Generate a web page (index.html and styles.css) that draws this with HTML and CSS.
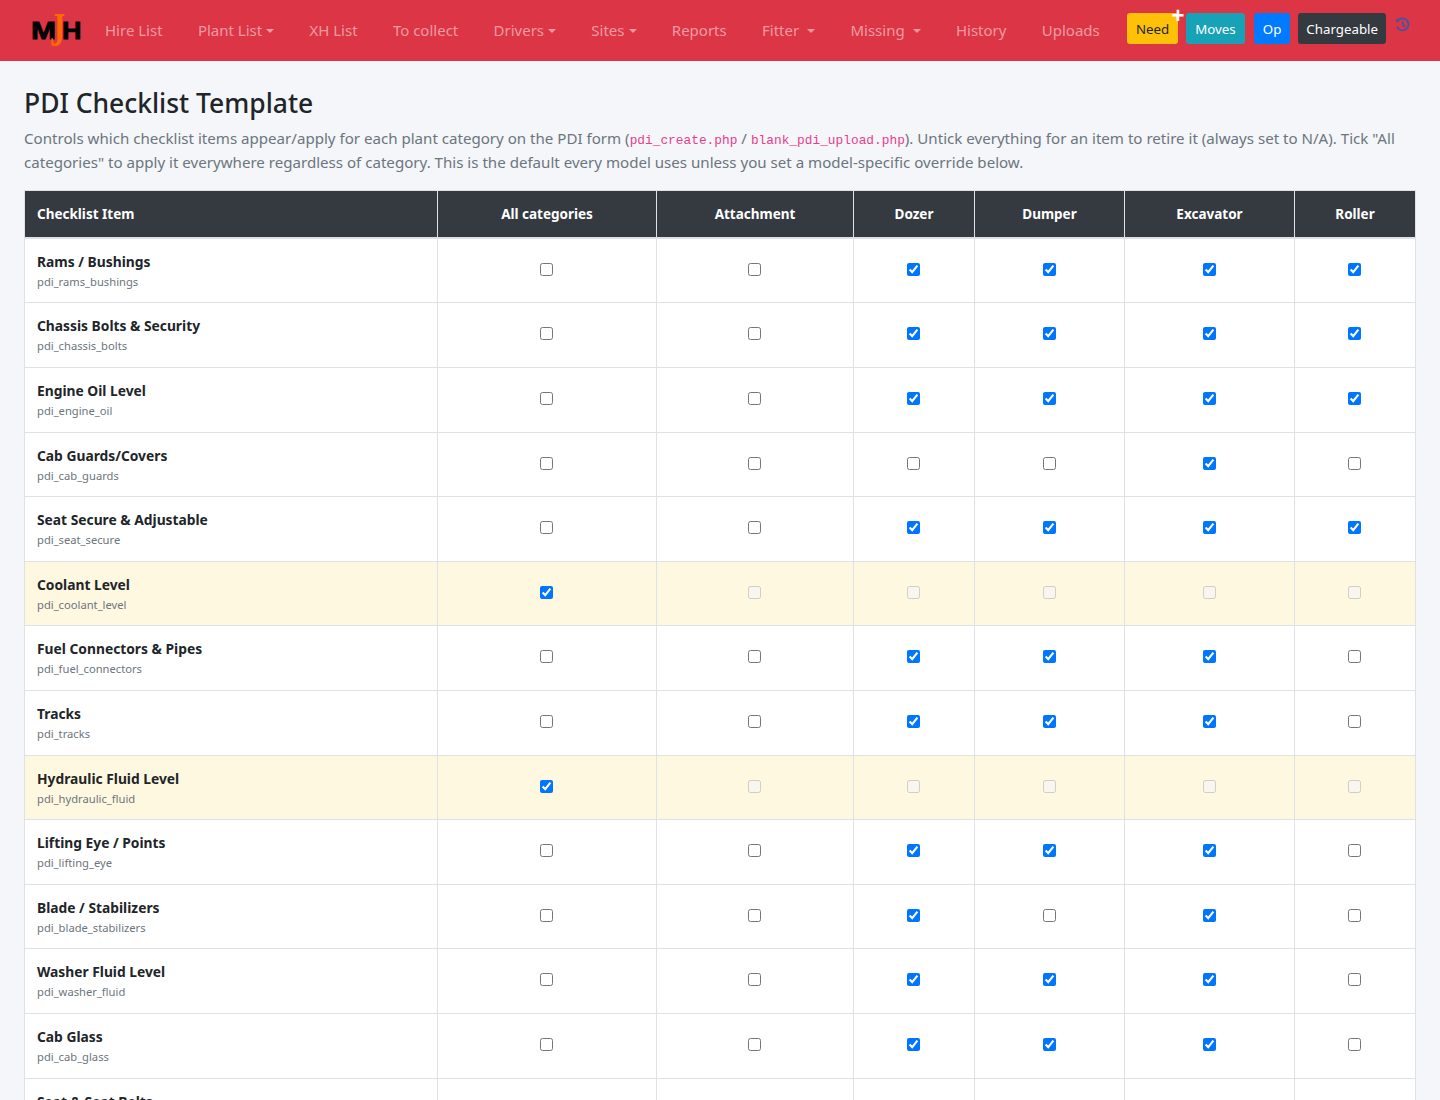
FILE: index.html
```html
<!DOCTYPE html>
<html lang="en">
<head>
    <meta charset="UTF-8">
    <meta name="viewport" content="width=device-width, initial-scale=1.0">
    <title>PDI Checklist Template</title>
    <link rel="stylesheet" href="styles.css">
</head>
<body>
    <nav class="top-nav">
        <a href="#" class="brand">
            <svg width="52" height="36" viewBox="0 0 52 36">
                <text x="0" y="25.5" class="logo-letter" textLength="25" lengthAdjust="spacingAndGlyphs">M</text>
                <text x="31" y="25.5" class="logo-letter" textLength="19.5" lengthAdjust="spacingAndGlyphs">H</text>
                <text x="19" y="33" class="logo-j" textLength="15" lengthAdjust="spacingAndGlyphs">J</text>
            </svg>
        </a>
        <ul class="nav-links">
            <li><a href="#">Hire List</a></li>
            <li><a href="#" class="caret">Plant List</a></li>
            <li><a href="#">XH List</a></li>
            <li><a href="#">To collect</a></li>
            <li><a href="#" class="caret">Drivers</a></li>
            <li><a href="#" class="caret">Sites</a></li>
            <li><a href="#">Reports</a></li>
            <li><a href="#" class="caret wide">Fitter</a></li>
            <li><a href="#" class="caret wide">Missing</a></li>
            <li><a href="#">History</a></li>
            <li><a href="#">Uploads</a></li>
        </ul>
        <div class="nav-buttons">
            <a href="#" class="btn btn-need">Need<span class="plus">+</span></a>
            <a href="#" class="btn btn-moves">Moves</a>
            <a href="#" class="btn btn-op">Op</a>
            <a href="#" class="btn btn-charge">Chargeable</a>
            <svg class="history-icon" width="15" height="15" viewBox="0 0 15 15">
                <path d="M3.2 3.2A6 6 0 1 1 2 9.6" />
                <path d="M1 1.2V5H4.8Z" class="fill" />
                <path d="M7.8 4.4V8L10 9.6" />
            </svg>
        </div>
    </nav>

    <main class="page">
        <h1>PDI Checklist Template</h1>
        <p class="intro">Controls which checklist items appear/apply for each plant category on the PDI form (<code>pdi_create.php</code> / <code>blank_pdi_upload.php</code>). Untick everything for an item to retire it (always set to N/A). Tick "All categories" to apply it everywhere regardless of category. This is the default every model uses unless you set a model-specific override below.</p>

        <table class="check-table">
            <colgroup>
                <col class="c-item"><col class="c-all"><col class="c-att"><col class="c-doz"><col class="c-dum"><col class="c-exc"><col class="c-rol">
            </colgroup>
            <thead>
                <tr>
                    <th>Checklist Item</th>
                    <th>All categories</th>
                    <th>Attachment</th>
                    <th>Dozer</th>
                    <th>Dumper</th>
                    <th>Excavator</th>
                    <th>Roller</th>
                </tr>
            </thead>
            <tbody>
                <tr>
                    <td><strong>Rams / Bushings</strong><small>pdi_rams_bushings</small></td>
                    <td><input type="checkbox"></td>
                    <td><input type="checkbox"></td>
                    <td><input type="checkbox" checked></td>
                    <td><input type="checkbox" checked></td>
                    <td><input type="checkbox" checked></td>
                    <td><input type="checkbox" checked></td>
                </tr>
                <tr>
                    <td><strong>Chassis Bolts &amp; Security</strong><small>pdi_chassis_bolts</small></td>
                    <td><input type="checkbox"></td>
                    <td><input type="checkbox"></td>
                    <td><input type="checkbox" checked></td>
                    <td><input type="checkbox" checked></td>
                    <td><input type="checkbox" checked></td>
                    <td><input type="checkbox" checked></td>
                </tr>
                <tr>
                    <td><strong>Engine Oil Level</strong><small>pdi_engine_oil</small></td>
                    <td><input type="checkbox"></td>
                    <td><input type="checkbox"></td>
                    <td><input type="checkbox" checked></td>
                    <td><input type="checkbox" checked></td>
                    <td><input type="checkbox" checked></td>
                    <td><input type="checkbox" checked></td>
                </tr>
                <tr>
                    <td><strong>Cab Guards/Covers</strong><small>pdi_cab_guards</small></td>
                    <td><input type="checkbox"></td>
                    <td><input type="checkbox"></td>
                    <td><input type="checkbox"></td>
                    <td><input type="checkbox"></td>
                    <td><input type="checkbox" checked></td>
                    <td><input type="checkbox"></td>
                </tr>
                <tr>
                    <td><strong>Seat Secure &amp; Adjustable</strong><small>pdi_seat_secure</small></td>
                    <td><input type="checkbox"></td>
                    <td><input type="checkbox"></td>
                    <td><input type="checkbox" checked></td>
                    <td><input type="checkbox" checked></td>
                    <td><input type="checkbox" checked></td>
                    <td><input type="checkbox" checked></td>
                </tr>
                <tr class="all-row">
                    <td><strong>Coolant Level</strong><small>pdi_coolant_level</small></td>
                    <td><input type="checkbox" checked></td>
                    <td><input type="checkbox" disabled></td>
                    <td><input type="checkbox" disabled></td>
                    <td><input type="checkbox" disabled></td>
                    <td><input type="checkbox" disabled></td>
                    <td><input type="checkbox" disabled></td>
                </tr>
                <tr>
                    <td><strong>Fuel Connectors &amp; Pipes</strong><small>pdi_fuel_connectors</small></td>
                    <td><input type="checkbox"></td>
                    <td><input type="checkbox"></td>
                    <td><input type="checkbox" checked></td>
                    <td><input type="checkbox" checked></td>
                    <td><input type="checkbox" checked></td>
                    <td><input type="checkbox"></td>
                </tr>
                <tr>
                    <td><strong>Tracks</strong><small>pdi_tracks</small></td>
                    <td><input type="checkbox"></td>
                    <td><input type="checkbox"></td>
                    <td><input type="checkbox" checked></td>
                    <td><input type="checkbox" checked></td>
                    <td><input type="checkbox" checked></td>
                    <td><input type="checkbox"></td>
                </tr>
                <tr class="all-row">
                    <td><strong>Hydraulic Fluid Level</strong><small>pdi_hydraulic_fluid</small></td>
                    <td><input type="checkbox" checked></td>
                    <td><input type="checkbox" disabled></td>
                    <td><input type="checkbox" disabled></td>
                    <td><input type="checkbox" disabled></td>
                    <td><input type="checkbox" disabled></td>
                    <td><input type="checkbox" disabled></td>
                </tr>
                <tr>
                    <td><strong>Lifting Eye / Points</strong><small>pdi_lifting_eye</small></td>
                    <td><input type="checkbox"></td>
                    <td><input type="checkbox"></td>
                    <td><input type="checkbox" checked></td>
                    <td><input type="checkbox" checked></td>
                    <td><input type="checkbox" checked></td>
                    <td><input type="checkbox"></td>
                </tr>
                <tr>
                    <td><strong>Blade / Stabilizers</strong><small>pdi_blade_stabilizers</small></td>
                    <td><input type="checkbox"></td>
                    <td><input type="checkbox"></td>
                    <td><input type="checkbox" checked></td>
                    <td><input type="checkbox"></td>
                    <td><input type="checkbox" checked></td>
                    <td><input type="checkbox"></td>
                </tr>
                <tr>
                    <td><strong>Washer Fluid Level</strong><small>pdi_washer_fluid</small></td>
                    <td><input type="checkbox"></td>
                    <td><input type="checkbox"></td>
                    <td><input type="checkbox" checked></td>
                    <td><input type="checkbox" checked></td>
                    <td><input type="checkbox" checked></td>
                    <td><input type="checkbox"></td>
                </tr>
                <tr>
                    <td><strong>Cab Glass</strong><small>pdi_cab_glass</small></td>
                    <td><input type="checkbox"></td>
                    <td><input type="checkbox"></td>
                    <td><input type="checkbox" checked></td>
                    <td><input type="checkbox" checked></td>
                    <td><input type="checkbox" checked></td>
                    <td><input type="checkbox"></td>
                </tr>
                <tr>
                    <td><strong>Seat &amp; Seat Belts</strong><small>pdi_seat_belts</small></td>
                    <td><input type="checkbox"></td>
                    <td><input type="checkbox"></td>
                    <td><input type="checkbox" checked></td>
                    <td><input type="checkbox" checked></td>
                    <td><input type="checkbox" checked></td>
                    <td><input type="checkbox"></td>
                </tr>
            </tbody>
        </table>
    </main>
</body>
</html>
```

FILE: styles.css
```css
* {
    box-sizing: border-box;
    margin: 0;
    padding: 0;
}

html {
    height: 1100px;
    overflow: hidden;
}

body {
    font-family: "Noto Sans", Arial, sans-serif;
    font-size: 15px;
    line-height: 1.5;
    color: #212529;
    background-color: #f4f6f9;
}

.top-nav {
    display: flex;
    align-items: center;
    height: 61px;
    padding: 0 30px 0 31px;
    background: #dc3545;
}

.brand {
    display: block;
    height: 36px;
    margin-right: 4px;
}

.logo-letter {
    font-family: "Liberation Sans", Arial, sans-serif;
    font-weight: 700;
    font-size: 24px;
    fill: #000;
    stroke: #000;
    stroke-width: 0.8px;
}

.logo-j {
    font-family: "Liberation Serif", serif;
    font-weight: 700;
    font-size: 48px;
    fill: #ff6a00;
}

.nav-links {
    display: flex;
    list-style: none;
    gap: 35.3px;
    margin-left: 18px;
}

.nav-links a {
    color: rgba(255,255,255,0.5);
    text-decoration: none;
    white-space: nowrap;
}

.caret::after {
    content: "";
    display: inline-block;
    margin-left: 4px;
    vertical-align: 3px;
    border-top: 4px solid;
    border-left: 4px solid transparent;
    border-right: 4px solid transparent;
}

.caret.wide::after {
    margin-left: 8px;
}

.nav-buttons {
    display: flex;
    align-items: center;
    gap: 8px;
    margin-left: auto;
    margin-bottom: 4px;
}

.btn {
    position: relative;
    display: block;
    padding: 4px 9px;
    height: 31px;
    border-radius: 3px;
    font-size: 13.3px;
    line-height: 25px;
    color: #fff;
    text-decoration: none;
}

.btn-need {
    background: #ffc107;
    color: #212529;
}

.btn-moves {
    background: #17a2b8;
}

.btn-op {
    background: #007bff;
    margin-left: 1px;
}

.btn-charge {
    background: #343a40;
    padding: 4px 8px;
}

.plus {
    position: absolute;
    top: -9px;
    right: -6px;
    font-family: "Liberation Sans", Arial, sans-serif;
    font-size: 22px;
    font-weight: 700;
    line-height: 24px;
    color: #fff;
}

.history-icon {
    margin: -8px 0 0 1px;
    fill: none;
    stroke: #3b55a8;
    stroke-width: 1.8;
}

.history-icon .fill {
    fill: #3b55a8;
    stroke: none;
}

.page {
    padding: 23px 24px 0;
}

h1 {
    font-size: 26.45px;
    font-weight: 500;
    line-height: 38px;
    margin-bottom: 4px;
}

.intro {
    color: #6c757d;
    font-size: 15.1px;
    line-height: 24px;
    margin-bottom: 16px;
}

code {
    font-family: "Liberation Mono", monospace;
    font-size: 12.83px;
    line-height: 0;
    color: #e83e8c;
}

.check-table {
    width: 1391px;
    table-layout: fixed;
    border-collapse: collapse;
    background: #fff;
    font-size: 13.5px;
}

.c-item { width: 413px; }
.c-all { width: 219px; }
.c-att { width: 197px; }
.c-doz { width: 121px; }
.c-dum { width: 150px; }
.c-exc { width: 170px; }
.c-rol { width: 121px; }

.check-table th,
.check-table td {
    border: 1px solid #dee2e6;
    padding: 10.6px 12.5px 13.4px 11.5px;
    text-align: center;
    vertical-align: middle;
}

.check-table th {
    height: 47.9px;
    background: #343a40;
    color: #fff;
    font-weight: 700;
    border-bottom-width: 2px;
    padding: 12px;
}

.check-table th:first-child,
.check-table td:first-child {
    padding: 10.6px 12px 11.4px;
    text-align: left;
}

.check-table td {
    height: 64.6px;
}

.check-table strong {
    display: block;
    font-size: 13.8px;
    line-height: 21px;
    font-weight: 700;
    margin: 1px 0;
}

.check-table small {
    display: block;
    line-height: 18px;
    font-size: 11.2px;
    color: #6c757d;
}

.check-table input {
    display: block;
    margin: 0 auto;
}

.all-row td {
    background: #fff8e1;
}
```
